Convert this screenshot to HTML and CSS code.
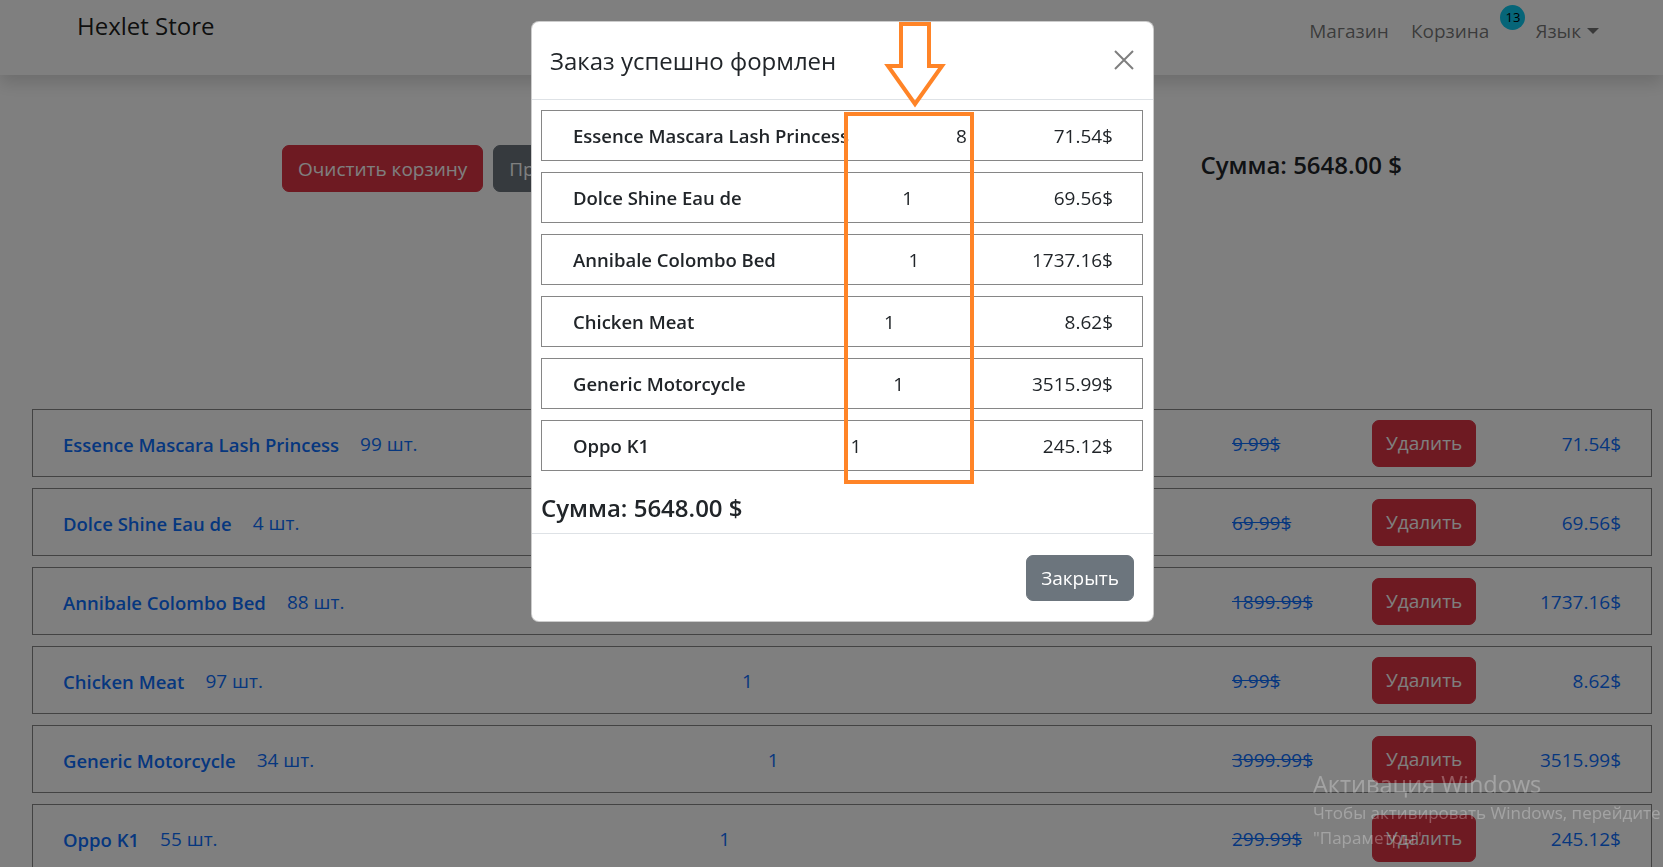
FILE: index.html
```html
<!DOCTYPE html>
<html lang="ru">
<head>
<meta charset="utf-8">
<title>Hexlet Store</title>
<link rel="stylesheet" href="styles.css">
</head>
<body>
<nav class="navbar">
  <a class="brand" href="#">Hexlet Store</a>
  <ul class="nav-links">
    <li><a class="nav-link" href="#">Магазин</a></li>
    <li><a class="nav-link cart-link" href="#">Корзина</a></li>
    <li><span class="badge">13</span></li>
    <li><a class="nav-link lang" href="#">Язык<span class="caret"></span></a></li>
  </ul>
</nav>

<main class="page">
  <div class="toolbar">
    <div class="actions">
      <button class="btn btn-danger">Очистить корзину</button>
      <button class="btn btn-secondary">Продолжить покупки</button>
    </div>
    <h4 class="sum">Сумма: 5648.00 $</h4>
  </div>

  <div class="cart-list">
    <div class="cart-row">
      <span class="item-name">Essence Mascara Lash Princess</span><span class="item-stock">99 шт.</span>
      <span class="item-qty">8</span>
      <div class="item-right"><span class="old-price">9.99$</span><button class="btn btn-danger btn-first">Удалить</button><span class="price">71.54$</span></div>
    </div>
    <div class="cart-row">
      <span class="item-name">Dolce Shine Eau de</span><span class="item-stock">4 шт.</span>
      <span class="item-qty">1</span>
      <div class="item-right"><span class="old-price">69.99$</span><button class="btn btn-danger">Удалить</button><span class="price">69.56$</span></div>
    </div>
    <div class="cart-row">
      <span class="item-name">Annibale Colombo Bed</span><span class="item-stock">88 шт.</span>
      <span class="item-qty">1</span>
      <div class="item-right"><span class="old-price">1899.99$</span><button class="btn btn-danger">Удалить</button><span class="price">1737.16$</span></div>
    </div>
    <div class="cart-row">
      <span class="item-name">Chicken Meat</span><span class="item-stock">97 шт.</span>
      <span class="item-qty">1</span>
      <div class="item-right"><span class="old-price">9.99$</span><button class="btn btn-danger">Удалить</button><span class="price">8.62$</span></div>
    </div>
    <div class="cart-row">
      <span class="item-name">Generic Motorcycle</span><span class="item-stock">34 шт.</span>
      <span class="item-qty">1</span>
      <div class="item-right"><span class="old-price">3999.99$</span><button class="btn btn-danger">Удалить</button><span class="price">3515.99$</span></div>
    </div>
    <div class="cart-row">
      <span class="item-name">Oppo K1</span><span class="item-stock">55 шт.</span>
      <span class="item-qty">1</span>
      <div class="item-right"><span class="old-price">299.99$</span><button class="btn btn-danger">Удалить</button><span class="price">245.12$</span></div>
    </div>
  </div>
</main>

<div class="backdrop"></div>

<div class="modal">
  <div class="modal-header">
    <h5 class="modal-title">Заказ успешно формлен</h5>
    <button class="btn-close" aria-label="Close">
      <svg width="20" height="20" viewBox="0 0 20 20"><path d="M1 1 L19 19 M19 1 L1 19" stroke="#000" stroke-width="2" fill="none"/></svg>
    </button>
  </div>
  <div class="modal-body">
    <div class="order-row"><span class="o-name">Essence Mascara Lash Princess</span><span class="o-qty">8</span><span class="o-price">71.54$</span></div>
    <div class="order-row"><span class="o-name">Dolce Shine Eau de</span><span class="o-qty">1</span><span class="o-price">69.56$</span></div>
    <div class="order-row"><span class="o-name">Annibale Colombo Bed</span><span class="o-qty">1</span><span class="o-price">1737.16$</span></div>
    <div class="order-row"><span class="o-name">Chicken Meat</span><span class="o-qty">1</span><span class="o-price">8.62$</span></div>
    <div class="order-row"><span class="o-name">Generic Motorcycle</span><span class="o-qty">1</span><span class="o-price">3515.99$</span></div>
    <div class="order-row"><span class="o-name">Oppo K1</span><span class="o-qty">1</span><span class="o-price">245.12$</span></div>
    <h4 class="modal-sum">Сумма: 5648.00 $</h4>
  </div>
  <div class="modal-footer">
    <button class="btn btn-secondary">Закрыть</button>
  </div>
</div>

<svg class="annotation" width="1663" height="867" viewBox="0 0 1663 867">
  <polygon points="901,24 929,24 929,66 942,66 915,104 888,66 901,66" fill="none" stroke="#ff8427" stroke-width="4" stroke-linejoin="miter"/>
  <rect x="846" y="114" width="126" height="368" fill="none" stroke="#ff8427" stroke-width="4"/>
</svg>

<div class="watermark">
  <div class="wm-title">Активация Windows</div>
  <div class="wm-text">Чтобы активировать Windows, перейдите в</div>
  <div class="wm-text">"Параметры".</div>
</div>
</body>
</html>
```

FILE: styles.css
```css
* { box-sizing: border-box; }

html, body {
  margin: 0;
  height: 100%;
}

body {
  font-family: "Open Sans", "Noto Sans", sans-serif;
  font-size: 19px;
  line-height: 1.5;
  color: #212529;
  background: #fff;
  overflow: hidden;
}

/* navbar */
.navbar {
  position: relative;
  z-index: 2;
  height: 75px;
  display: flex;
  justify-content: space-between;
  align-items: flex-start;
  padding: 0 64px 0 77px;
  background: #fff;
  box-shadow: 0 8px 16px rgba(0, 0, 0, .15);
}

.brand {
  font-size: 24px;
  line-height: 36px;
  padding-top: 8px;
  color: rgba(0, 0, 0, .9);
  text-decoration: none;
}

.nav-links {
  display: flex;
  align-items: flex-start;
  list-style: none;
  margin: 0;
  padding: 17px 0 0;
}

.nav-link {
  display: flex;
  align-items: center;
  color: rgba(0, 0, 0, .55);
  font-size: 19px;
  line-height: 28px;
  text-decoration: none;
}

.nav-links li + li { margin-left: 22px; }
.nav-links li:nth-child(3) { margin-left: 11px; }
.nav-links li:nth-child(4) { margin-left: 10px; }

.badge {
  display: flex;
  align-items: center;
  justify-content: center;
  width: 25px;
  height: 25px;
  margin-top: -12px;
  border-radius: 50%;
  background: #0dcaf0;
  color: #000;
  font-size: 13px;
  line-height: 1;
}

.caret {
  display: inline-block;
  margin-left: 6px;
  border-top: 6px solid;
  border-left: 6.5px solid transparent;
  border-right: 6.5px solid transparent;
}

/* page */
.page {
  padding: 70px 11px 0 32px;
}

.toolbar {
  display: flex;
  justify-content: space-between;
  align-items: center;
  padding: 0 250px;
  height: 47px;
}

.actions {
  display: flex;
  gap: 10px;
}

.btn {
  font-family: inherit;
  font-size: 19px;
  line-height: 30px;
  padding: 7.5px 15px;
  border: 1px solid transparent;
  border-radius: 7px;
  color: #fff;
  cursor: pointer;
  white-space: nowrap;
}

.btn-danger { background: #dc3545; border-color: #dc3545; }
.btn-secondary { background: #6c757d; border-color: #6c757d; }

.sum {
  margin: 0;
  font-size: 24px;
  font-weight: 600;
  line-height: 1.2;
  margin-top: -6px;
}

.cart-list {
  margin-top: 217px;
  display: flex;
  flex-direction: column;
  gap: 11px;
}

.cart-row {
  height: 68px;
  display: flex;
  align-items: center;
  padding: 3px 30px 0;
  border: 1px solid #868686;
  color: #0d6efd;
  white-space: nowrap;
}

.item-name { font-weight: 600; font-size: 18.5px; }
.item-stock { margin-left: 21px; }
.item-qty { flex: 1; text-align: center; }

.item-right {
  width: 389px;
  display: grid;
  grid-template-columns: 140px 104px 1fr;
  align-items: center;
  margin-top: -3px;
}

.item-right .btn { padding: 7.5px 13px; }
.old-price, .price { padding-top: 3px; }
.old-price { text-decoration: line-through; }
.price { text-align: right; }

/* backdrop & modal */
.backdrop {
  position: fixed;
  inset: 0;
  z-index: 10;
  background: rgba(0, 0, 0, .5);
}

.modal {
  position: fixed;
  left: 531px;
  top: 21px;
  z-index: 20;
  width: 623px;
  background: #fff;
  border: 1px solid rgba(0, 0, 0, .2);
  border-radius: 8px;
}

.modal-header {
  height: 78px;
  display: flex;
  align-items: center;
  justify-content: space-between;
  padding: 0 19px 0 18px;
  border-bottom: 1px solid #dee2e6;
}

.modal-title {
  margin: 0;
  font-size: 24px;
  font-weight: 500;
  line-height: 1.2;
  padding-top: 2px;
}

.btn-close {
  display: flex;
  padding: 0;
  border: 0;
  background: none;
  opacity: .5;
  margin-top: -2px;
}

.modal-body {
  padding: 10px 10px 0 9px;
  display: flex;
  flex-direction: column;
  gap: 11px;
}

.order-row {
  height: 51px;
  display: flex;
  align-items: center;
  justify-content: space-between;
  padding: 1px 29px 0 31px;
  border: 1px solid #868686;
  white-space: nowrap;
}

.o-name { font-weight: 600; font-size: 18.5px; margin-right: 20px; }

.modal-sum {
  margin: 12px 0 10px;
  font-size: 24px;
  font-weight: 600;
  line-height: 1.2;
}

.modal-footer {
  display: flex;
  justify-content: flex-end;
  padding: 21px 19px 20px;
  border-top: 1px solid #dee2e6;
}

.modal-footer .btn { padding: 7px 14px; line-height: 30px; }

/* annotation overlay */
.annotation {
  position: fixed;
  left: 0;
  top: 0;
  z-index: 30;
  pointer-events: none;
}

.watermark {
  position: fixed;
  left: 1313px;
  top: 768px;
  z-index: 40;
  color: rgba(255, 255, 255, .28);
  white-space: nowrap;
  pointer-events: none;
}

.wm-title { font-size: 23.5px; line-height: 32px; }
.wm-text { font-size: 17px; line-height: 25px; }
```
